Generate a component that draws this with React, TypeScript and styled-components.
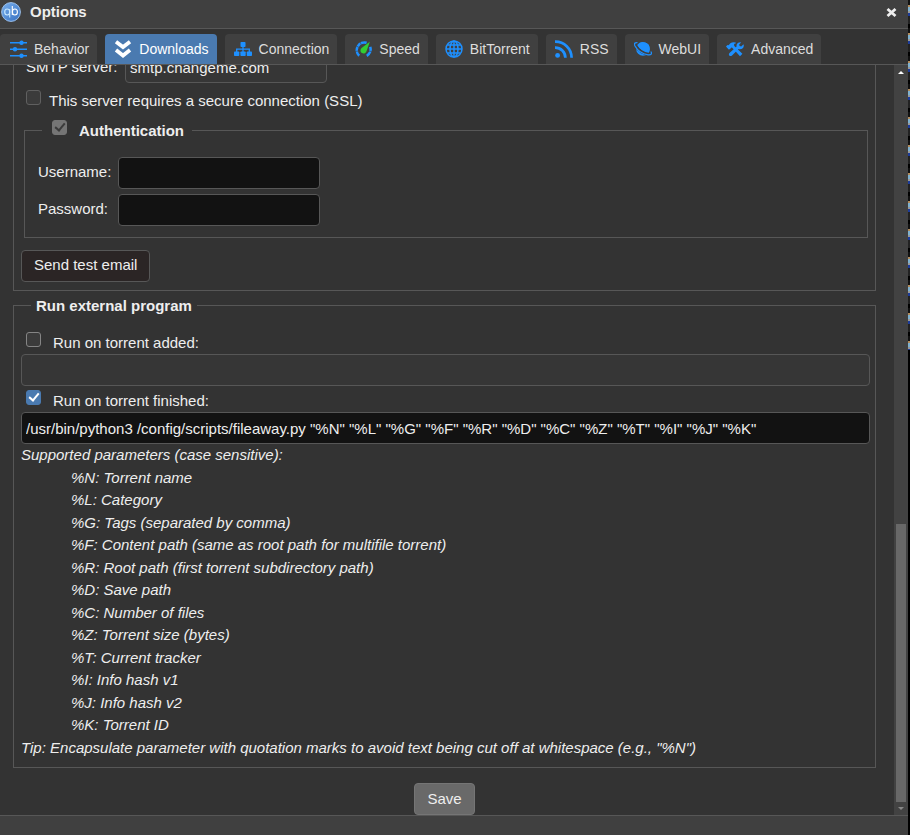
import React from "react";
import styled, { createGlobalStyle, css } from "styled-components";

const LINE = "#575757";
const BLUE = "#1e90ff";

const Global = createGlobalStyle`
  *, *::after { box-sizing: border-box; }
  html, body, #root { height: 100%; }
  body {
    margin: 0;
    background: #000;
    color: #eee;
    font: 15px/1.5 "Liberation Sans", Arial, sans-serif;
  }
  input, button { font: inherit; color: inherit; }
`;

const Screen = styled.div`
  display: flex;
  height: 100vh;
  overflow: hidden;
`;

const Dialog = styled.section`
  display: flex;
  flex-direction: column;
  flex: 1;
  min-width: 0;
  background: #333;
`;

const Backdrop = styled.div`
  width: 2px;
  background: linear-gradient(#000, #000) 0 350px no-repeat,
    repeating-linear-gradient(#111 0 5px, #b08a5a 5px 7px, #7fb2d0 7px 11px, #9a9a9a 11px 13px, #1c3c9c 13px 16px, #222 16px 24px, #000 24px 28px);
`;

const TitleBar = styled.header`
  display: flex;
  align-items: center;
  flex: none;
  height: 29px;
  padding: 0 10px 5px 1px;
  gap: 9px;
  background: #404040;
  border-bottom: 1px solid ${LINE};
`;

const Title = styled.h1`
  flex: 1;
  margin: 0;
  font-size: 15px;
  line-height: 24px;
`;

const CloseButton = styled.button`
  display: flex;
  padding: 2px 0 0;
  border: 0;
  background: none;
`;

const Tabs = styled.nav`
  display: flex;
  flex: none;
  align-items: flex-end;
  gap: 8px;
  height: 36px;
  border-bottom: 1px solid ${LINE};
`;

const Tab = styled.button<{ $active: boolean }>`
  display: flex;
  align-items: center;
  gap: 7px;
  height: 30px;
  padding: 0 8px 0 9px;
  border: 0;
  border-radius: 4px 4px 0 0;
  background: ${(p) => (p.$active ? "#4a7ab0" : "#404040")};
  color: ${(p) => (p.$active ? "#fff" : "#ddd")};
  font-size: 14px;
  line-height: 20px;
  white-space: nowrap;
  svg { flex: none; }
`;

const Body = styled.div`
  display: flex;
  flex: 1;
  min-height: 0;
`;

const Pane = styled.form`
  display: flex;
  flex-direction: column;
  justify-content: flex-end;
  flex: 1;
  min-width: 0;
  padding: 0 18px 0 13px;
  overflow: hidden;
`;

const ScrollTrack = styled.div`
  display: flex;
  flex-direction: column;
  align-items: center;
  width: 14px;
  padding: 6px 0 5px;
  background: #424242;
`;

const ScrollSpace = styled.div`
  flex: 448;
`;

const ScrollThumb = styled.div`
  flex: 276;
  width: 10px;
  margin-bottom: 5px;
  background: #686868;
`;

const Footer = styled.footer`
  flex: none;
  height: 20px;
  background: #404040;
  border-top: 1px solid ${LINE};
`;

const group = css`
  min-width: 0;
  border: 1px solid ${LINE};
`;

const Panel = styled.fieldset`
  ${group}
  flex: none;
  margin: 0 0 4px;
  padding: 11px 5px 8px 7px;
  &:last-of-type { margin-bottom: 15px; }
`;

const MailPanel = styled(Panel)`
  border-top: 0;
`;

const AuthGroup = styled.fieldset`
  ${group}
  margin: 6px 2px 12px 3px;
  padding: 14px 13px 11px;
`;

const Legend = styled.legend`
  margin-left: 10px;
  padding: 0 5px;
  font-weight: bold;
`;

const AuthLegend = styled.legend`
  margin-left: 4px;
  padding: 2px 8px 0 10px;
  font-weight: bold;
`;

const CheckRow = styled.div<{ $gap: number }>`
  display: flex;
  align-items: flex-start;
  gap: ${(p) => p.$gap}px;
`;

const OptionRow = styled(CheckRow)`
  padding: 4px 0 0 5px;
  > label { height: 22px; }
`;

const FieldRow = styled.div`
  display: flex;
  align-items: center;
  & + & { margin-top: 5px; }
`;

const FieldLabel = styled.label<{ $width: number }>`
  width: ${(p) => p.$width}px;
`;

const SmtpRow = styled(FieldRow)`
  padding-left: 5px;
  margin-bottom: 3px;
`;

const TextBox = styled.input<{ $muted?: boolean; $wide?: boolean }>`
  display: block;
  width: ${(p) => (p.$wide ? "100%" : "202px")};
  height: 32px;
  padding: 0 4px;
  border: 1px solid ${LINE};
  border-radius: 4px;
  background: ${(p) => (p.$muted ? "#363636" : "#121212")};
  outline: 0;
`;

const Check = styled.input.attrs({ type: "checkbox" })`
  appearance: none;
  display: flex;
  justify-content: center;
  flex: none;
  width: 15px;
  height: 15px;
  margin: 0;
  border: 1px solid #858585;
  border-radius: 3px;
  background: #3b3b3b;
  &:checked { background: #4a7ab0; border-color: #4a7ab0; }
  &:disabled { background: #3b3b3b; border-color: #606060; }
  &:disabled:checked { background: #757575; border-color: #757575; }
  &:checked::after {
    content: "";
    width: 6px;
    height: 10px;
    border: solid #fff;
    border-width: 0 2px 2px 0;
    transform: rotate(40deg);
  }
  &:disabled:checked::after { border-color: #3b3b3b; }
`;

const Button = styled.button<{ $primary?: boolean }>`
  flex: none;
  height: 32px;
  padding: 0 12px;
  border: 1px solid ${(p) => (p.$primary ? "#757575" : LINE)};
  border-radius: 4px;
  background: ${(p) => (p.$primary ? "#696969" : "#2b2525")};
  align-self: center;
`;

const Help = styled.div`
  font-style: italic;
  p, ul { margin: 0; }
  ul { padding-left: 50px; list-style: none; }
`;

const Logo = () => (
  <svg width="20" height="20" viewBox="0 0 20 20" aria-hidden="true">
    <defs>
      <linearGradient id="logo" x2="1" y2="1">
        <stop stopColor="#79b0ee" />
        <stop offset="1" stopColor="#356ebf" />
      </linearGradient>
    </defs>
    <circle cx="10" cy="10" r="9.4" fill="url(#logo)" stroke="#9cc0ea" strokeWidth="1" />
    <g fill="none" strokeWidth="1.1">
      <path d="M8.700 7V15.500" stroke="#c8e8ff" />
      <ellipse cx="6.200" cy="10" rx="2.500" ry="3" stroke="#c8e8ff" />
      <path d="M11.300 4V13" stroke="#fff" />
      <ellipse cx="13.900" cy="10" rx="2.500" ry="3" stroke="#fff" />
    </g>
  </svg>
);

const icons: Record<string, React.ReactNode> = {
  Behavior: (
    <g stroke={BLUE} strokeWidth="1.400" fill={BLUE}>
      <path d="M1 2.700h17M1 9.200h17M1 15.700h17" />
      <circle cx="12.500" cy="2.700" r="1.500" />
      <circle cx="6" cy="9.200" r="1.500" />
      <circle cx="12.500" cy="15.700" r="1.500" />
    </g>
  ),
  Downloads: (
    <path d="M2 1.700 9 7l7-5.300M2 10l7 5.500 7-5.500" fill="none" stroke="#fff" strokeWidth="3.800" />
  ),
  Connection: (
    <g fill={BLUE}>
      <rect x="6.500" y="2" width="5" height="5" rx=".8" />
      <rect x="0" y="11.500" width="5.300" height="4.500" rx=".8" />
      <rect x="6.400" y="11.500" width="5.300" height="4.500" rx=".8" />
      <rect x="12.800" y="11.500" width="5.200" height="4.500" rx=".8" />
      <path d="M9 6v6M2.700 12V9.200h12.600V12" fill="none" stroke={BLUE} strokeWidth="1.300" />
    </g>
  ),
  Speed: (
    <g>
      <path d="M5.200 15.800A7.700 7.700 0 0 1 12.600 2.800M16.200 6.800a7.700 7.700 0 0 1-3.400 9" fill="none" stroke={BLUE} strokeWidth="2.600" />
      <path d="m1.500 5.500 3.500 2M6 1.500l1.200 3.300M.5 11.500l3.500-.4M17.800 11.500l-3.500-.4" stroke="#404040" strokeWidth=".6" />
      <path d="M15.800 1.800 12.600 11a3.100 3.100 0 1 1-5-3z" fill="#32cd32" />
    </g>
  ),
  BitTorrent: (
    <g fill="none" stroke={BLUE} strokeWidth="1.500">
      <circle cx="9" cy="9" r="8" />
      <ellipse cx="9" cy="9" rx="4" ry="8" />
      <path d="M9 1v16M1 9h16M2.400 5h13.200M2.400 13h13.200" />
    </g>
  ),
  RSS: (
    <g fill="none" stroke={BLUE} strokeWidth="2.700">
      <circle cx="2.600" cy="15.400" r="2.400" fill={BLUE} stroke="none" />
      <path d="M0 7.600a10.200 10.200 0 0 1 10.400 10.200M0 1.700A16.200 16.200 0 0 1 16.600 17.800" />
    </g>
  ),
  WebUI: (
    <g>
      <circle cx="9" cy="9" r="6.800" fill={BLUE} />
      <path d="M1.800 5.500C4 10 9.500 13.700 16.500 14.200" fill="none" stroke="#404040" strokeWidth="3" />
      <path d="M3.500 2.600C.8 2.200-.2 3.600 1 6c2.500 4.600 7.500 8 13 8.800 3.200.4 4.400-1 2.800-3.300" fill="none" stroke={BLUE} strokeWidth="1.300" />
      <path d="M3.400 5.200A6.700 6.700 0 0 1 15.700 9.500L14.700 12.800C10 12 6 9.200 3.400 5.200z" fill={BLUE} />
    </g>
  ),
  Advanced: (
    <g fill={BLUE}>
      <path d="M0 6.600 1.500 5 2.600 5.200 4.400 3.200Q6.500 1.700 9.600 2.400L10 3.300Q8 3.500 8 4.700L8.300 6 16.400 13.700 14 16.300 6.200 7.800 5.400 7.600 3.800 9.300 2.600 9.400z" />
      <path d="M15.200 2.200 13.100 4.700 13.700 6.100 15.200 6.400 17.600 4.200Q18.600 9 13.700 9.300L12.500 9 6 15.500Q4.500 16.700 3.300 15.500 2.400 14.400 3.500 13L10.500 6.800Q10 2 15.200 2.200z" />
    </g>
  ),
};

const parameters = [
  "%N: Torrent name",
  "%L: Category",
  "%G: Tags (separated by comma)",
  "%F: Content path (same as root path for multifile torrent)",
  "%R: Root path (first torrent subdirectory path)",
  "%D: Save path",
  "%C: Number of files",
  "%Z: Torrent size (bytes)",
  "%T: Current tracker",
  "%I: Info hash v1",
  "%J: Info hash v2",
  "%K: Torrent ID",
];

const command =
  '/usr/bin/python3 /config/scripts/fileaway.py "%N" "%L" "%G" "%F" "%R" "%D" "%C" "%Z" "%T" "%I" "%J" "%K"';

export default function App() {
  return (
    <Screen>
      <Global />
      <Dialog aria-label="Options">
        <TitleBar>
          <Logo />
          <Title>Options</Title>
          <CloseButton aria-label="Close">
            <svg width="13" height="13" viewBox="0 0 13 13">
              <path d="m2.500 3 8 7m0-7-8 7" stroke="#eee" strokeWidth="2.800" />
            </svg>
          </CloseButton>
        </TitleBar>
        <Tabs>
          {Object.keys(icons).map((name) => (
            <Tab key={name} type="button" $active={name === "Downloads"}>
              <svg width="18" height="18" viewBox="0 0 18 18" aria-hidden="true">
                {icons[name]}
              </svg>
              {name}
            </Tab>
          ))}
        </Tabs>
        <Body>
          <Pane onSubmit={(e) => e.preventDefault()}>
            <MailPanel>
              <SmtpRow>
                <FieldLabel $width={99} htmlFor="smtp">SMTP server:</FieldLabel>
                <TextBox id="smtp" $muted defaultValue="smtp.changeme.com" />
              </SmtpRow>
              <OptionRow $gap={8}>
                <Check id="ssl" disabled />
                <label htmlFor="ssl">This server requires a secure connection (SSL)</label>
              </OptionRow>
              <AuthGroup>
                <AuthLegend>
                  <CheckRow $gap={12}>
                    <Check id="auth" disabled defaultChecked />
                    <label htmlFor="auth">Authentication</label>
                  </CheckRow>
                </AuthLegend>
                <FieldRow>
                  <FieldLabel $width={80} htmlFor="user">Username:</FieldLabel>
                  <TextBox id="user" />
                </FieldRow>
                <FieldRow>
                  <FieldLabel $width={80} htmlFor="pass">Password:</FieldLabel>
                  <TextBox id="pass" type="password" />
                </FieldRow>
              </AuthGroup>
              <Button type="button">Send test email</Button>
            </MailPanel>
            <Panel>
              <Legend>Run external program</Legend>
              <OptionRow $gap={12}>
                <Check id="added" />
                <label htmlFor="added">Run on torrent added:</label>
              </OptionRow>
              <TextBox $wide $muted aria-label="Program run on torrent added" />
              <OptionRow $gap={12}>
                <Check id="finished" defaultChecked />
                <label htmlFor="finished">Run on torrent finished:</label>
              </OptionRow>
              <TextBox $wide aria-label="Program run on torrent finished" defaultValue={command} />
              <Help>
                <p>Supported parameters (case sensitive):</p>
                <ul>
                  {parameters.map((p) => (
                    <li key={p}>{p}</li>
                  ))}
                </ul>
                <p>Tip: Encapsulate parameter with quotation marks to avoid text being cut off at whitespace (e.g., "%N")</p>
              </Help>
            </Panel>
            <Button $primary>Save</Button>
          </Pane>
          <ScrollTrack aria-hidden="true">
            <svg width="6" height="3" viewBox="0 0 6 3"><path d="M0 3 3 0l3 3z" fill="#fff" /></svg>
            <ScrollSpace />
            <ScrollThumb />
            <svg width="6" height="3" viewBox="0 0 6 3"><path d="M0 0h6L3 3z" fill="#888" /></svg>
          </ScrollTrack>
        </Body>
        <Footer />
      </Dialog>
      <Backdrop />
    </Screen>
  );
}
